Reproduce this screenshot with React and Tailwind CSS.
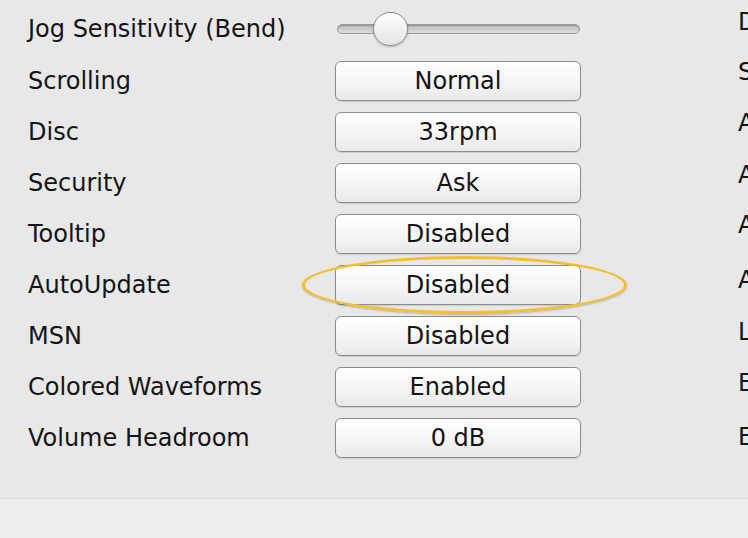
import React from 'react';

const rows = [
  { label: 'Scrolling', value: 'Normal' },
  { label: 'Disc', value: '33rpm' },
  { label: 'Security', value: 'Ask' },
  { label: 'Tooltip', value: 'Disabled' },
  { label: 'AutoUpdate', value: 'Disabled', circled: true },
  { label: 'MSN', value: 'Disabled' },
  { label: 'Colored Waveforms', value: 'Enabled' },
  { label: 'Volume Headroom', value: '0 dB' },
];

// right column runs past the window edge, only first letters show
const rightCol = [
  { text: 'D', top: 'mt-[7px]' },
  { text: 'S', top: 'mt-[20px]' },
  { text: 'A', top: 'mt-[21px]' },
  { text: 'A', top: 'mt-[22px]' },
  { text: 'A', top: 'mt-[20px]' },
  { text: 'A', top: 'mt-[25px]' },
  { text: 'L', top: 'mt-[22px]' },
  { text: 'E', top: 'mt-[21px]' },
  { text: 'E', top: 'mt-[24px]' },
];

const OptionButton = ({ value }) => (
  <button className="shrink-0 w-[246px] h-[40px] rounded-[6px] border border-[#8c8c8c] bg-gradient-to-b from-white via-[#f6f6f6] to-[#e9e9e9] shadow-[0_1px_1px_rgba(0,0,0,0.12)] text-[24px] leading-none text-[#141414] flex items-center justify-center">
    {value}
  </button>
);

const App = () => {
  return (
    <div className="w-[748px] h-[538px] overflow-hidden bg-[#e8e8e8] flex flex-col font-['DejaVu_Sans',sans-serif] text-[#141414]">
      <div className="h-[498px] flex">
        {/* Options */}
        <div className="shrink-0 w-[738px] flex flex-col">
          <div className="h-[57px] flex items-center">
            <span className="shrink-0 w-[335px] pl-[28px] text-[24px] leading-none whitespace-nowrap">Jog Sensitivity (Bend)</span>
            <div className="relative shrink-0 w-[246px] h-[40px] flex items-center">
              <div className="ml-[2px] w-[243px] h-[10px] rounded-full border border-[#9a9a9a] bg-gradient-to-b from-[#b8b8b8] to-[#dedede] shadow-[inset_0_1px_1px_rgba(0,0,0,0.2)]" />
              <div className="absolute left-[38px] top-[3px] w-[35px] h-[34px] rounded-full border border-[#8e8e8e] bg-gradient-to-b from-white to-[#e4e4e4] shadow-[0_1px_2px_rgba(0,0,0,0.25)]" />
            </div>
          </div>
          <div className="mt-[4px] flex flex-col gap-[11px]">
            {rows.map((r) => (
              <div key={r.label} className="relative h-[40px] flex items-center">
                <span className="shrink-0 w-[335px] pl-[28px] text-[24px] leading-none whitespace-nowrap">{r.label}</span>
                <OptionButton value={r.value} />
                {r.circled && (
                  <div className="absolute left-[302px] top-[-9px] w-[325px] h-[58px] rounded-[50%] border-[3px] border-[#f4bf2e] shadow-[0_1px_2px_rgba(0,0,0,0.25)]" />
                )}
              </div>
            ))}
          </div>
        </div>

        {/* Right column, clipped by the window */}
        <div className="shrink-0 flex flex-col">
          {rightCol.map((c, i) => (
            <span key={i} className={`${c.top} text-[24px] leading-[30px] whitespace-nowrap`}>{c.text}</span>
          ))}
        </div>
      </div>

      <div className="flex-1 border-t border-[#d8d8d8] bg-[#ededed]" />
    </div>
  );
};

export default App;
